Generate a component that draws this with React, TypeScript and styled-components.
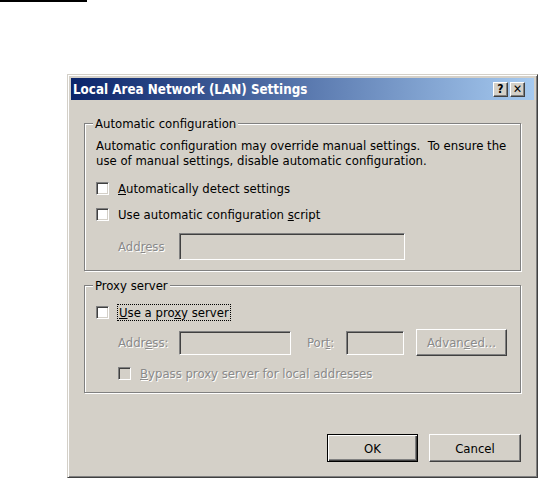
import styled, { createGlobalStyle } from "styled-components";

const Global = createGlobalStyle`
  html, body {
    margin: 0;
    padding: 0;
    background: #fff;
  }
  body {
    font-family: "DejaVu Sans Condensed", "DejaVu Sans", sans-serif;
    font-size: 13px;
    color: #000;
  }
`;

const Page = styled.div`
  width: 557px;
  height: 478px;
  overflow: hidden;
`;

const TopRule = styled.div`
  width: 87px;
  height: 2px;
  background: #000;
`;

const Dialog = styled.div`
  box-sizing: border-box;
  width: 471px;
  height: 404px;
  margin: 72px 0 0 67px;
  padding: 3px;
  background: #d4d0c8;
  border: 1px solid;
  border-color: #d4d0c8 #404040 #404040 #d4d0c8;
  box-shadow: inset 1px 1px 0 #fff, inset -1px -1px 0 #808080;
  display: flex;
  flex-direction: column;
`;

const TitleBar = styled.div`
  height: 22px;
  display: flex;
  align-items: center;
  padding: 0 9px 0 2px;
  background: linear-gradient(to right, #0a246a, #a6caf0);
`;

const TitleText = styled.div`
  flex: 1;
  color: #fff;
  font-weight: bold;
  font-size: 13.3px;
`;

const CaptionButton = styled.div`
  box-sizing: border-box;
  width: 15px;
  height: 15px;
  margin-left: 2px;
  background: #d4d0c8;
  border: 1px solid;
  border-color: #fff #404040 #404040 #fff;
  box-shadow: inset -1px -1px 0 #808080;
  display: flex;
  align-items: center;
  justify-content: center;
  font-weight: bold;
  font-size: 12px;
  line-height: 1;
`;

const Body = styled.div`
  flex: 1;
  display: flex;
  flex-direction: column;
  padding: 16px 13px 12px 13px;
`;

const Group = styled.fieldset<{ $pt: number; $pb: number }>`
  margin: 0;
  padding: ${({ $pt }) => $pt}px 11px ${({ $pb }) => $pb}px 11px;
  border: 1px solid #808080;
  box-shadow: inset 1px 1px 0 #fff, 1px 1px 0 #fff;
  display: flex;
  flex-direction: column;
  min-width: 0;
  & + & {
    margin-top: 7px;
  }
`;

const Legend = styled.legend`
  padding: 0 2px;
  margin-left: -3px;
  line-height: 15px;
  background: #d4d0c8;
`;

const Para = styled.p`
  margin: 0;
  line-height: 15px;
`;

const Row = styled.div<{ $mt: number; $indent?: number }>`
  display: flex;
  align-items: center;
  margin-top: ${({ $mt }) => $mt}px;
  padding-left: ${({ $indent }) => $indent || 0}px;
  height: 17px;
`;

const FieldRow = styled.div<{ $mt: number; $h: number }>`
  display: flex;
  align-items: center;
  margin-top: ${({ $mt }) => $mt}px;
  padding-left: 22px;
  height: ${({ $h }) => $h}px;
`;

const Check = styled.span<{ $disabled?: boolean }>`
  box-sizing: border-box;
  flex: none;
  width: 13px;
  height: 13px;
  background: ${({ $disabled }) => ($disabled ? "#d4d0c8" : "#fff")};
  border: 1px solid;
  border-color: #808080 #fff #fff #808080;
  box-shadow: inset 1px 1px 0 #404040, inset -1px -1px 0 #d4d0c8;
`;

const CheckLabel = styled.span<{ $disabled?: boolean; $focus?: boolean }>`
  margin-left: ${({ $focus }) => ($focus ? 8 : 9)}px;
  padding: 0 ${({ $focus }) => ($focus ? 1 : 0)}px;
  line-height: 15px;
  border: ${({ $focus }) => ($focus ? "1px dotted #000" : "none")};
  color: ${({ $disabled }) => ($disabled ? "#8a8a8a" : "#000")};
  text-shadow: ${({ $disabled }) => ($disabled ? "1px 1px 0 #fff" : "none")};
`;

const FieldLabel = styled.span<{ $w: number }>`
  width: ${({ $w }) => $w}px;
  flex: none;
  color: #8a8a8a;
  text-shadow: 1px 1px 0 #fff;
`;

const Input = styled.div<{ $w: number; $h: number }>`
  box-sizing: border-box;
  flex: none;
  width: ${({ $w }) => $w}px;
  height: ${({ $h }) => $h}px;
  background: #d4d0c8;
  border: 1px solid;
  border-color: #808080 #fff #fff #808080;
  box-shadow: inset 1px 1px 0 #404040, inset -1px -1px 0 #d4d0c8;
`;

const Button = styled.div<{ $w: number; $h: number; $default?: boolean; $disabled?: boolean }>`
  box-sizing: border-box;
  flex: none;
  width: ${({ $w }) => $w}px;
  height: ${({ $h }) => $h}px;
  display: flex;
  align-items: center;
  justify-content: center;
  background: #d4d0c8;
  border: 1px solid;
  border-color: ${({ $default }) =>
    $default ? "#000" : "#fff #404040 #404040 #fff"};
  box-shadow: ${({ $default }) =>
    $default
      ? "inset 1px 1px 0 #fff, inset -1px -1px 0 #404040, inset -2px -2px 0 #808080"
      : "inset -1px -1px 0 #808080"};
  color: ${({ $disabled }) => ($disabled ? "#8a8a8a" : "#000")};
  text-shadow: ${({ $disabled }) => ($disabled ? "1px 1px 0 #fff" : "none")};
`;

const Footer = styled.div`
  margin-top: auto;
  display: flex;
  justify-content: flex-end;
  gap: 11px;
`;

export default function App() {
  return (
    <Page>
      <Global />
      <TopRule />
      <Dialog>
        <TitleBar>
          <TitleText>Local Area Network (LAN) Settings</TitleText>
          <CaptionButton>?</CaptionButton>
          <CaptionButton>✕</CaptionButton>
        </TitleBar>
        <Body>
          <Group $pt={7} $pb={10}>
            <Legend>Automatic configuration</Legend>
            <Para>
              Automatic configuration may override manual settings.&nbsp; To ensure the
              <br />
              use of manual settings, disable automatic configuration.
            </Para>
            <Row $mt={12}>
              <Check />
              <CheckLabel>
                <u>A</u>utomatically detect settings
              </CheckLabel>
            </Row>
            <Row $mt={9}>
              <Check />
              <CheckLabel>
                Use automatic configuration <u>s</u>cript
              </CheckLabel>
            </Row>
            <FieldRow $mt={10} $h={27}>
              <FieldLabel $w={61}>
                Add<u>r</u>ess
              </FieldLabel>
              <Input $w={226} $h={27} />
            </FieldRow>
          </Group>
          <Group $pt={11} $pb={10}>
            <Legend>Proxy server</Legend>
            <Row $mt={0}>
              <Check />
              <CheckLabel $focus>
                <u>U</u>se a pro<u>x</u>y server
              </CheckLabel>
            </Row>
            <FieldRow $mt={8} $h={27}>
              <FieldLabel $w={61}>
                Addr<u>e</u>ss:
              </FieldLabel>
              <Input $w={112} $h={24} />
              <FieldLabel $w={39} style={{ marginLeft: 16 }}>
                Por<u>t</u>:
              </FieldLabel>
              <Input $w={58} $h={24} />
              <Button $w={91} $h={27} $disabled style={{ marginLeft: 12 }}>
                Advan<u>c</u>ed...
              </Button>
            </FieldRow>
            <Row $mt={9} $indent={22}>
              <Check $disabled />
              <CheckLabel $disabled>
                <u>B</u>ypass proxy server for local addresses
              </CheckLabel>
            </Row>
          </Group>
          <Footer>
            <Button $w={91} $h={28} $default>
              OK
            </Button>
            <Button $w={92} $h={28}>
              Cancel
            </Button>
          </Footer>
        </Body>
      </Dialog>
    </Page>
  );
}
